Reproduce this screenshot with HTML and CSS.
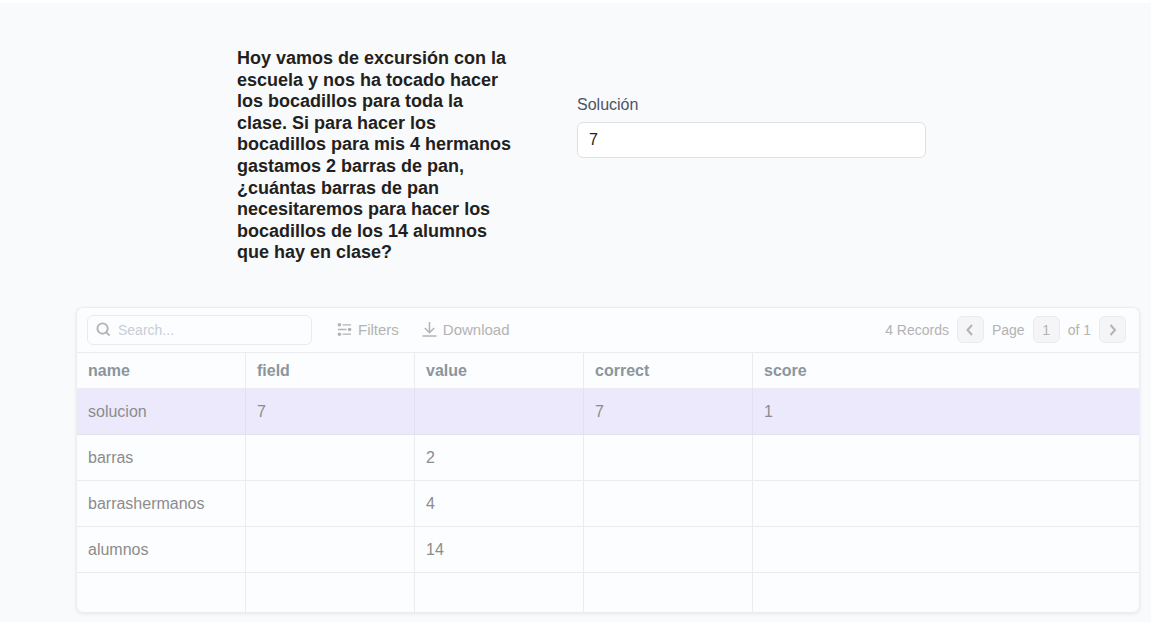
FILE: index.html
```html
<!DOCTYPE html>
<html lang="es">
<head>
  <meta charset="UTF-8" />
  <meta name="viewport" content="width=device-width, initial-scale=1.0"/>
  <title>Bocadillos</title>
  <link rel="stylesheet" href="styles.css">
</head>
<body>

<main class="page">
  <div class="problem">
    <p class="question">Hoy vamos de excursión con la escuela y nos ha tocado hacer los bocadillos para toda la clase. Si para hacer los bocadillos para mis 4 hermanos gastamos 2 barras de pan, ¿cuántas barras de pan necesitaremos para hacer los bocadillos de los 14 alumnos que hay en clase?</p>
    <div class="answer">
      <label for="solucion">Solución</label>
      <input type="text" id="solucion" value="7" />
    </div>
  </div>

  <div class="card">
    <div class="toolbar">
      <label class="search" for="search">
        <svg width="15" height="15" viewBox="0 0 16 16" fill="none" stroke="currentColor" stroke-width="2" aria-hidden="true">
          <circle cx="7" cy="7" r="5.5"/>
          <path d="M11 11l3.5 3.5"/>
        </svg>
        <input type="text" id="search" placeholder="Search..." aria-label="Search" />
      </label>
      <button type="button" class="tool">
        <svg width="15" height="15" viewBox="0 0 16 16" fill="none" stroke="currentColor" stroke-width="1.4" aria-hidden="true">
          <path d="M6 3h9M1 8h9M6 13h9M1 3h3M12 8h3M1 13h3"/>
          <g fill="currentColor" stroke="none">
            <circle cx="2.600" cy="3" r="1.900"/>
            <circle cx="13.400" cy="8" r="1.900"/>
            <circle cx="2.600" cy="13" r="1.900"/>
          </g>
        </svg>
        Filters
      </button>
      <button type="button" class="tool">
        <svg width="15" height="15" viewBox="0 0 16 16" fill="none" stroke="currentColor" stroke-width="1.6" aria-hidden="true">
          <path d="M8 0v11.500M3 6.500l5 5 5-5M0.500 15h15"/>
        </svg>
        Download
      </button>
      <div class="pager">
        <span class="records">4 Records</span>
        <button type="button" class="page-btn" aria-label="Previous page">
          <svg width="14" height="14" viewBox="0 0 14 14" fill="none" stroke="currentColor" stroke-width="2" aria-hidden="true"><path d="M9 2L4.500 7 9 12"/></svg>
        </button>
        <label for="pageNumber">Page</label>
        <input type="text" id="pageNumber" class="page-number" value="1" />
        <span>of 1</span>
        <button type="button" class="page-btn" aria-label="Next page">
          <svg width="14" height="14" viewBox="0 0 14 14" fill="none" stroke="currentColor" stroke-width="2" aria-hidden="true"><path d="M4.500 2L9 7l-4.500 5"/></svg>
        </button>
      </div>
    </div>

    <table>
      <colgroup>
        <col class="col"><col class="col"><col class="col"><col class="col"><col>
      </colgroup>
      <thead>
        <tr><th>name</th><th>field</th><th>value</th><th>correct</th><th>score</th></tr>
      </thead>
      <tbody>
        <tr class="selected"><td>solucion</td><td>7</td><td></td><td>7</td><td>1</td></tr>
        <tr><td>barras</td><td></td><td>2</td><td></td><td></td></tr>
        <tr><td>barrashermanos</td><td></td><td>4</td><td></td><td></td></tr>
        <tr><td>alumnos</td><td></td><td>14</td><td></td><td></td></tr>
        <tr class="filler"><td></td><td></td><td></td><td></td><td></td></tr>
      </tbody>
    </table>
  </div>
</main>

</body>
</html>
```
FILE: styles.css
```css
* {
  box-sizing: border-box;
}
body {
  margin: 0;
  padding: 3px 6px 0 0;
  background: #fff;
  font-family: "Liberation Sans", Arial, sans-serif;
}
input, button {
  font-family: inherit;
}
.page {
  background: #f9fafc;
  padding: 45px 12px 10px 77px;
}
.problem {
  display: grid;
  grid-template-columns: 280px minmax(0, 349px);
  gap: 60px;
  padding-left: 160px;
}
.question {
  margin: 0;
  font-size: 18px;
  font-weight: bold;
  line-height: 1.2;
  color: #231f20;
}
.answer {
  padding-top: 48px;
}
.answer label {
  display: block;
  margin-bottom: 8px;
  font-size: 16px;
  line-height: 18px;
  color: #4b5465;
}
.answer input {
  width: 100%;
  height: 36px;
  padding: 0 11px;
  border: 1px solid #e0e0e0;
  border-radius: 6px;
  background: #fff;
  font-size: 16px;
  color: #231f20;
}
.card {
  margin-top: 44px;
  border-radius: 6px;
  background: #fcfdfe;
  box-shadow: 0 0 0 1px #ebedef, 0 1px 4px rgba(0, 0, 0, 0.12);
  overflow: hidden;
}
.toolbar {
  display: flex;
  align-items: center;
  height: 45px;
  padding: 0 13px 0 10px;
  border-bottom: 1px solid #ececee;
  color: #b3b3b3;
  font-size: 14px;
}
.search {
  display: flex;
  align-items: center;
  gap: 7px;
  width: 225px;
  height: 30px;
  margin-right: 25px;
  padding: 0 8px;
  border: 1px solid #e9eaec;
  border-radius: 6px;
}
.search input {
  flex: 1;
  min-width: 0;
  padding: 0;
  border: none;
  background: none;
  font-size: 14px;
  color: #8c8c8c;
}
.search input::placeholder {
  color: #c8cdd5;
}
.tool {
  display: flex;
  align-items: center;
  gap: 6px;
  margin-right: 23px;
  padding: 0;
  border: none;
  background: none;
  color: inherit;
  font-size: 15px;
}
.pager {
  display: flex;
  align-items: center;
  gap: 8px;
  margin-left: auto;
}
.page-btn, .page-number {
  display: flex;
  align-items: center;
  justify-content: center;
  width: 27px;
  height: 27px;
  padding: 0;
  border: 1px solid #ebebed;
  border-radius: 6px;
  background: #f5f5f7;
  color: inherit;
}
.page-number {
  font-size: 14px;
  text-align: center;
}
table {
  width: 100%;
  table-layout: fixed;
  border-collapse: separate;
  border-spacing: 0;
}
.col {
  width: 169px;
}
th, td {
  height: 46px;
  padding: 1px 11px 0;
  border-right: 1px solid #ececee;
  border-bottom: 1px solid #ececee;
  font-size: 16px;
  text-align: left;
  color: #8c8c8c;
}
th {
  height: 36px;
  color: #8c959c;
}
th:last-child, td:last-child {
  border-right: none;
}
.selected td {
  background: #ebe9fb;
  border-color: #e2e0f0;
}
.filler td {
  height: 39px;
  border-bottom: none;
}
```
